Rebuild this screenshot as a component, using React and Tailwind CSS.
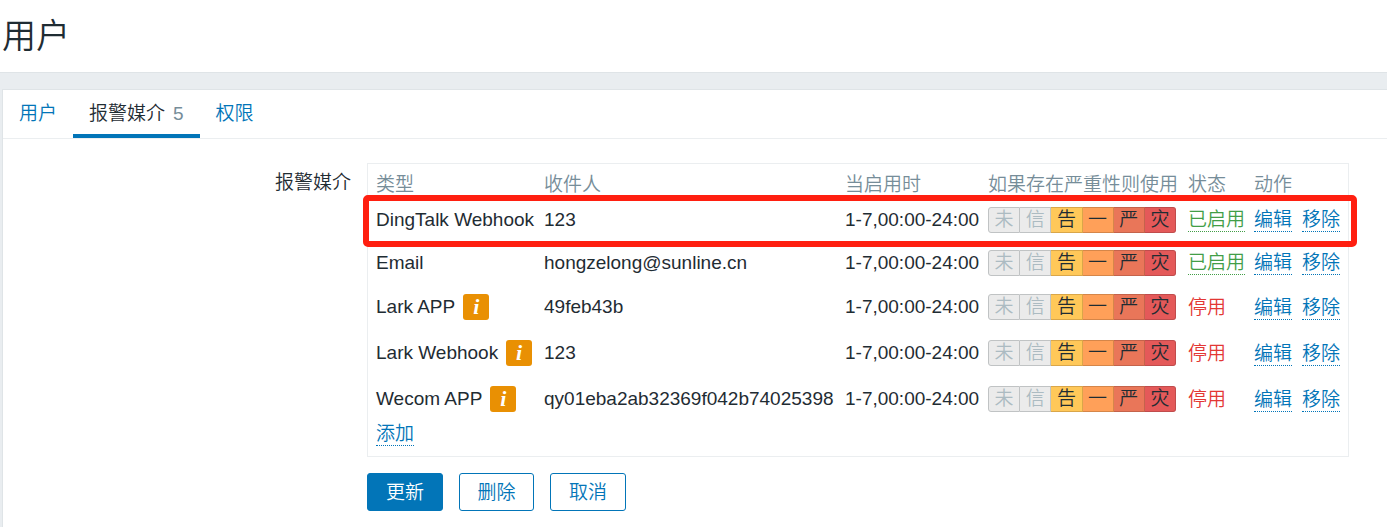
const tabs = [
  { name: '用户' },
  { name: '报警媒介', count: 5, active: true },
  { name: '权限' },
];

const columns = [
  { name: '类型', width: 'w-[176px] pl-2' },
  { name: '收件人', width: 'w-[301px]' },
  { name: '当启用时', width: 'w-[143px]' },
  { name: '如果存在严重性则使用', width: 'w-[200px]' },
  { name: '状态', width: 'w-[66px]' },
  { name: '动作', width: 'w-[94px]' },
];

const severities = [
  { mark: '未', style: 'rounded-l-[3px] border-l border-[#c0c3c4] bg-[#ebebeb] text-[#acbbc2]' },
  { mark: '信', style: 'border-[#c0c3c4] bg-[#ebebeb] text-[#acbbc2]' },
  { mark: '告', style: 'border-[#d9a649] bg-[#ffc859] text-[#1f2c33]' },
  { mark: '一', style: 'border-[#d58649] bg-[#ffa059] text-[#1f2c33]' },
  { mark: '严', style: 'border-[#c4634b] bg-[#e97659] text-[#1f2c33]' },
  { mark: '灾', style: 'rounded-r-[3px] border-[#c04c4c] bg-[#e45959] text-[#1f2c33]' },
];

const media = [
  { type: 'DingTalk Webhook', sendTo: '123', enabled: true, marked: true },
  { type: 'Email', sendTo: 'hongzelong@sunline.cn', enabled: true },
  { type: 'Lark APP', sendTo: '49feb43b', info: true },
  { type: 'Lark Webhook', sendTo: '123', info: true },
  { type: 'Wecom APP', sendTo: 'qy01eba2ab32369f042b74025398', info: true },
];

function LinkButton({ children, color = 'text-[#0275b8]' }) {
  return (
    <button type="button" className={`cursor-pointer border-b border-dotted border-current pt-0.5 leading-[22px] whitespace-nowrap ${color}`}>
      {children}
    </button>
  );
}

function InfoButton() {
  return (
    <button
      type="button"
      className="size-[26px] cursor-pointer rounded-[3px] bg-[#e99003] font-['Liberation_Serif',serif] text-[22px] leading-6 font-bold text-white italic"
    >
      i
    </button>
  );
}

function MediaRow({ item }) {
  return (
    <tr className={item.info ? 'h-[46px]' : 'relative h-[43px]'}>
      <td className="pl-2">
        <div className="flex items-center gap-2 whitespace-nowrap">
          {item.type}
          {item.info && <InfoButton />}
        </div>
        {item.marked && (
          <span className="pointer-events-none absolute -top-[3px] -right-[9px] -bottom-[6px] -left-[5px] rounded-[5px] border-[6px] border-[#ff1f10]" />
        )}
      </td>
      <td>{item.sendTo}</td>
      <td className="whitespace-nowrap">1-7,00:00-24:00</td>
      <td>
        <div className="flex w-[188px]">
          {severities.map((s) => (
            <span key={s.mark} className={`h-[26px] flex-1 border-y border-r text-center leading-6 ${s.style}`}>
              {s.mark}
            </span>
          ))}
        </div>
      </td>
      <td>
        {item.enabled ? (
          <LinkButton color="text-[#429e47]">已启用</LinkButton>
        ) : (
          <button type="button" className="cursor-pointer pt-0.5 text-[#e33734]">停用</button>
        )}
      </td>
      <td>
        <div className="flex gap-2.5">
          <LinkButton>编辑</LinkButton>
          <LinkButton>移除</LinkButton>
        </div>
      </td>
    </tr>
  );
}

export default function App() {
  return (
    <div className="flex min-h-screen flex-col bg-[#e9edf0] font-['Liberation_Sans','Noto_Sans_CJK_SC',sans-serif] text-[19px] leading-7 font-[350] text-[#1f2c33]">
      <header className="border-b border-[#dfe4e7] bg-white px-0.5 py-4">
        <h1 className="text-[34px] leading-10">用户</h1>
      </header>
      <main className="mt-4 ml-0.5 flex-1 border-t border-l border-[#dfe4e7] bg-white">
        <nav className="flex h-[49px] border-b border-[#ebeef0]">
          {tabs.map((tab) => (
            <a
              key={tab.name}
              href="#"
              className={`flex items-center gap-2 border-b-4 px-4 pt-1 ${
                tab.active ? 'border-[#0275b8] text-[#1f2c33]' : 'border-transparent text-[#0275b8]'
              }`}
            >
              {tab.name}
              {tab.count && <span className="text-[#768d99]">{tab.count}</span>}
            </a>
          ))}
        </nav>
        <div className="flex gap-4 pt-6">
          <div id="media-label" className="w-[348px] shrink-0 pt-1.5 text-right">报警媒介</div>
          <div className="shrink-0">
            <div className="border border-[#ebeef0] pb-2.5">
              <table aria-labelledby="media-label" className="table-fixed border-collapse">
                <thead>
                  <tr>
                    {columns.map((c) => (
                      <th key={c.name} className={`pt-2 text-left leading-[26px] font-[350] whitespace-nowrap text-[#768d99] ${c.width}`}>
                        {c.name}
                      </th>
                    ))}
                  </tr>
                </thead>
                <tbody>
                  {media.map((item) => (
                    <MediaRow key={item.type} item={item} />
                  ))}
                </tbody>
              </table>
              <div className="flex h-6 items-end pl-2">
                <LinkButton>添加</LinkButton>
              </div>
            </div>
            <div className="mt-4 flex gap-4">
              <button type="button" className="h-[38px] w-[76px] rounded-[3px] border border-[#0275b8] bg-[#0275b8] pt-0.5 text-white">更新</button>
              <button type="button" className="h-[38px] w-[75px] rounded-[3px] border border-[#0275b8] pt-0.5 text-[#0275b8]">删除</button>
              <button type="button" className="h-[38px] w-[76px] rounded-[3px] border border-[#0275b8] pt-0.5 text-[#0275b8]">取消</button>
            </div>
          </div>
        </div>
      </main>
    </div>
  );
}
